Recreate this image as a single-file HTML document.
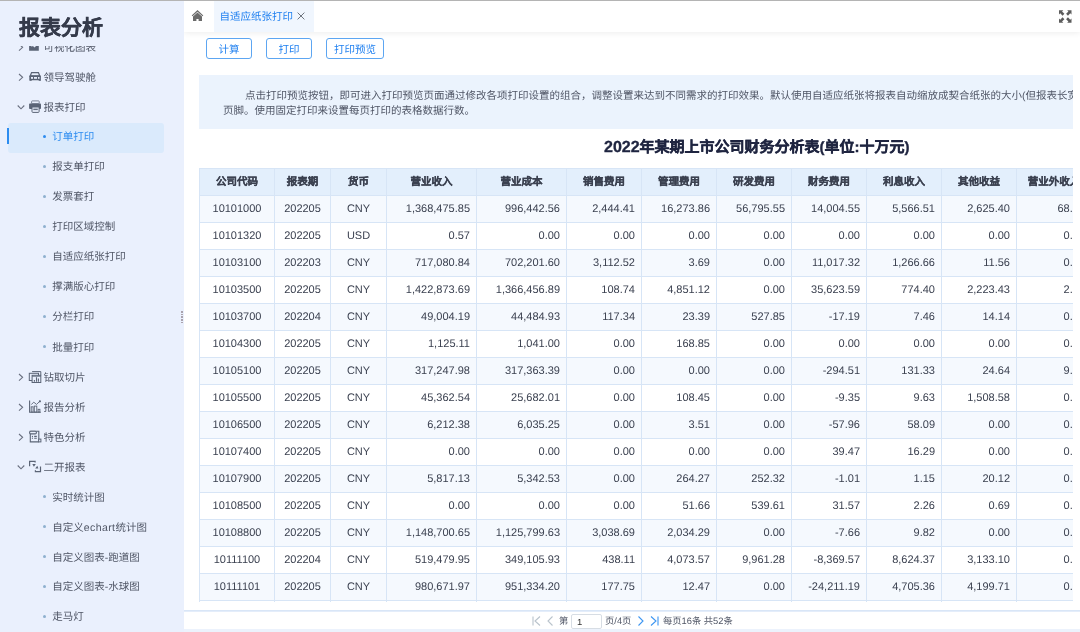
<!DOCTYPE html>
<html lang="zh-CN"><head><meta charset="utf-8">
<style>
*{box-sizing:border-box;margin:0;padding:0}
html,body{width:1080px;height:632px;overflow:hidden;background:#ecf2fc;font-family:"Liberation Sans",sans-serif;text-rendering:geometricPrecision}
.topline{position:absolute;left:0;top:0;width:1080px;height:1px;background:#b4b4b4;z-index:10}
#side{position:absolute;left:0;top:1px;width:184px;height:631px;background:#eaf0fd;overflow:hidden;will-change:transform}
#side .ttl{position:absolute;left:0;top:0;width:184px;height:44.8px;background:#eaf0fd;z-index:2}
#side .ttl span{position:absolute;left:19px;top:16px;font-size:21px;font-weight:bold;color:#353b4b;-webkit-text-stroke:0.4px #353b4b;line-height:24px;white-space:nowrap}
.mi{position:absolute;left:0;width:183px;height:30px;font-size:10.5px;line-height:30px;color:#4f5565;white-space:nowrap}
.mi .t{position:absolute;top:0}
.l1 .t{left:43.5px}
.l2 .t{left:52.3px}
.l2 .dot{position:absolute;left:43px;top:12.4px;width:3px;height:3px;border-radius:50%;background:#8eb0cf}
.mi.sel .bg{position:absolute;left:8px;top:1px;width:155.5px;height:29.5px;background:#daeafc;border-radius:3px}
.mi.sel .bar{position:absolute;left:7px;top:6px;width:2px;height:15.5px;background:#2d8cf0}
.mi.sel .t{color:#2d8cf0}
.mi.sel .dot{background:#2d8cf0}
.arr{position:absolute;left:17px;top:-1px;width:8px;height:30px}
.ico{position:absolute;left:28px;width:14px;height:30px}
.splitter{position:absolute;left:181px;top:310px;width:2px;height:13px;}
.splitter i{display:block;width:1.7px;height:1.6px;background:#aaa3ad;margin-bottom:1.1px}

#main{position:absolute;left:184px;top:1px;width:896px;height:628px;background:#fff;overflow:hidden;will-change:transform}
#hdr{position:absolute;left:0;top:0;width:896px;height:30.5px;background:#fff;box-shadow:0 1px 6px rgba(0,0,0,0.075);z-index:3}
#hdr .home{position:absolute;left:7px;top:9px;width:13px;height:12px}
#hdr .tab{position:absolute;left:30px;top:0;width:99.5px;height:30.5px;background:#f0f6fe;font-size:10.5px;color:#2080f0;line-height:30px;white-space:nowrap}
#hdr .tab span{position:absolute;left:5.5px;top:1px}
#hdr .tab b{position:absolute;left:83px;top:0;font-weight:normal;color:#7f8794;font-size:13px}
#hdr .full{position:absolute;left:875px;top:9px;width:12.5px;height:13px}
.btn{position:absolute;top:37px;height:21px;border:1px solid #5da6f2;border-radius:3px;font-size:10.5px;line-height:23.3px;color:#2080f0;text-align:center;background:#fff;white-space:nowrap}
#clip{position:absolute;left:0;top:31px;width:889px;height:570px;overflow:hidden}
.info{position:absolute;left:15px;top:43px;width:900px;height:54px;background:#ebf3fd;font-size:10.5px;color:#4f5565;white-space:nowrap}
.info p{position:absolute;line-height:15px}
.rtitle{position:absolute;left:420px;top:104.7px;font-size:15px;font-weight:bold;color:#1f2540;-webkit-text-stroke:0.35px #1f2540;white-space:nowrap;line-height:22px}
table{position:absolute;left:15px;top:136px;border-collapse:collapse;table-layout:fixed;width:892px}
th,td{border:1px solid #d7e5f6;height:27px;font-size:10.5px;white-space:nowrap;overflow:hidden;padding:0 6px}
th{background:#e3effc;color:#3b4150;font-weight:bold;text-align:center;padding-bottom:2px;-webkit-text-stroke:0.25px #3b4150}
td{color:#3b4150;font-size:11px;padding-bottom:1px}
td.c{text-align:center}
td.r{text-align:right}
tr.odd td{background:#f5f9fe}
tr.even td{background:#fff}
#pager{position:absolute;left:0;top:609px;width:896px;height:19px;background:#fff;border-top:1px solid #d9e6f7;box-shadow:inset 0 1px 0 #e4edfa;padding-top:1px;font-size:9.3px;color:#4f5565;white-space:nowrap}
#pager .it{position:absolute;top:2px;line-height:17px}
#pager input{position:absolute;left:387px;top:2.5px;width:30.5px;height:15px;border:1px solid #d7dde4;border-radius:2px;font-size:9.5px;padding-left:5px;color:#333;font-family:"Liberation Sans",sans-serif;background:#fff}
</style></head><body>
<div class="topline"></div>
<div id="side">
<div class="ttl"><span>报表分析</span></div>
<div class="mi l1" style="top:32.0px"><svg class="arr" viewBox="0 0 8 30"><path d="M2 12 L5.6 15.3 L2 18.6" stroke="#6a7080" stroke-width="1.1" fill="none"/></svg><svg class="ico" style="top:-1px" viewBox="0 0 14 30"><path d="M1.1 18.7 V11 H3.4 V14.8 L5 14 L6.4 15.6 L7.6 14.6 L8.8 12.5 H10.8 V18.7 Z" fill="#5b6476"/></svg><span class="t">可视化图表</span></div>
<div class="mi l1" style="top:62.0px"><svg class="arr" viewBox="0 0 8 30"><path d="M2 12 L5.6 15.3 L2 18.6" stroke="#6a7080" stroke-width="1.1" fill="none"/></svg><svg class="ico" style="top:-1px" viewBox="0 0 14 30"><path d="M3.6 10.6 H10.4 L11.8 13.9 H2.2 Z" fill="none" stroke="#5b6476" stroke-width="1.2"/><rect x="1.3" y="13.6" width="11.6" height="4.6" rx="0.6" fill="#5b6476"/><rect x="3" y="15" width="2" height="1.8" fill="#eaf0fd"/><rect x="6" y="15" width="3" height="1.8" fill="#eaf0fd"/><rect x="10" y="15" width="1.5" height="1.8" fill="#eaf0fd"/><rect x="1.5" y="17.8" width="2.2" height="1" fill="#5b6476"/><rect x="10.7" y="17.8" width="2.2" height="1" fill="#5b6476"/></svg><span class="t">领导驾驶舱</span></div>
<div class="mi l1" style="top:91.8px"><svg class="arr" viewBox="0 0 8 30"><path d="M0.7 13.5 L4 16.8 L7.3 13.5" stroke="#6a7080" stroke-width="1.1" fill="none"/></svg><svg class="ico" style="top:-1px" viewBox="0 0 14 30"><rect x="3.6" y="8.9" width="7.6" height="2.8" rx="0.6" fill="#eaf0fd" stroke="#7d8698" stroke-width="1"/><rect x="1.1" y="11.5" width="11.9" height="5.5" rx="0.8" fill="#5b6476"/><rect x="4" y="15" width="7.1" height="5.4" rx="0.8" fill="#eaf0fd" stroke="#5b6476" stroke-width="1"/><path d="M5.3 16.2 H9.8" stroke="#98a1b0" stroke-width="0.9"/><path d="M5.3 17.6 H9.8" stroke="#5b6476" stroke-width="1"/></svg><span class="t">报表打印</span></div>
<div class="mi l2 sel" style="top:121.3px"><div class="bg"></div><div class="bar"></div><i class="dot"></i><span class="t">订单打印</span></div>
<div class="mi l2" style="top:151.3px"><i class="dot"></i><span class="t">报支单打印</span></div>
<div class="mi l2" style="top:181.3px"><i class="dot"></i><span class="t">发票套打</span></div>
<div class="mi l2" style="top:211.3px"><i class="dot"></i><span class="t">打印区域控制</span></div>
<div class="mi l2" style="top:241.3px"><i class="dot"></i><span class="t">自适应纸张打印</span></div>
<div class="mi l2" style="top:271.3px"><i class="dot"></i><span class="t">撑满版心打印</span></div>
<div class="mi l2" style="top:301.3px"><i class="dot"></i><span class="t">分栏打印</span></div>
<div class="mi l2" style="top:331.5px"><i class="dot"></i><span class="t">批量打印</span></div>
<div class="mi l1" style="top:362.0px"><svg class="arr" viewBox="0 0 8 30"><path d="M2 12 L5.6 15.3 L2 18.6" stroke="#6a7080" stroke-width="1.1" fill="none"/></svg><svg class="ico" style="top:-1px" viewBox="0 0 14 30"><path d="M4.1 9.6 H12.8 V13.3" fill="none" stroke="#5b6476" stroke-width="1"/><rect x="1.3" y="11.3" width="9.2" height="7.2" fill="#eaf0fd" stroke="#5b6476" stroke-width="1"/><rect x="4.1" y="13.3" width="8.7" height="7.2" fill="#eaf0fd" stroke="#5b6476" stroke-width="1"/><path d="M4.1 14.3 H12.8" stroke="#5b6476" stroke-width="0.8"/><path d="M6.4 19.8 V18 M8.5 19.8 V15.2 M10.4 19.8 V16.6" stroke="#5b6476" stroke-width="1.1"/></svg><span class="t">钻取切片</span></div>
<div class="mi l1" style="top:392.2px"><svg class="arr" viewBox="0 0 8 30"><path d="M2 12 L5.6 15.3 L2 18.6" stroke="#6a7080" stroke-width="1.1" fill="none"/></svg><svg class="ico" style="top:-1px" viewBox="0 0 14 30"><path d="M1.6 8.6 V20.3 H12.8" fill="none" stroke="#5b6476" stroke-width="1.1"/><rect x="3.2" y="14.8" width="1.9" height="5.3" fill="none" stroke="#5b6476" stroke-width="0.9"/><rect x="6.3" y="14.1" width="2.5" height="6" fill="none" stroke="#5b6476" stroke-width="0.9"/><rect x="10.1" y="17.3" width="1.8" height="2.8" fill="none" stroke="#5b6476" stroke-width="0.9"/><path d="M3.3 12.5 L5.8 10.2 L8.5 12.4 L11.5 9.6" fill="none" stroke="#5b6476" stroke-width="0.9"/><circle cx="11.9" cy="9.3" r="1.1" fill="#5b6476"/></svg><span class="t">报告分析</span></div>
<div class="mi l1" style="top:422.1px"><svg class="arr" viewBox="0 0 8 30"><path d="M2 12 L5.6 15.3 L2 18.6" stroke="#6a7080" stroke-width="1.1" fill="none"/></svg><svg class="ico" style="top:-1px" viewBox="0 0 14 30"><path d="M1.6 9.3 H10.8 V17.4" fill="none" stroke="#5b6476" stroke-width="1.1"/><rect x="1.6" y="9.3" width="6.8" height="2.6" rx="1.2" fill="#eaf0fd" stroke="#5b6476" stroke-width="1.1"/><path d="M2.3 11.9 V19.9 H10.8" fill="none" stroke="#5b6476" stroke-width="1.1"/><rect x="10.6" y="17.1" width="2.3" height="2.8" fill="#eaf0fd" stroke="#5b6476" stroke-width="1"/><circle cx="4.4" cy="14.4" r="0.6" fill="#5b6476"/><circle cx="4.4" cy="16.2" r="0.6" fill="#5b6476"/><path d="M6.2 14.4 H8.8 M6.2 16.2 H8.8" stroke="#5b6476" stroke-width="1.1"/></svg><span class="t">特色分析</span></div>
<div class="mi l1" style="top:452.3px"><svg class="arr" viewBox="0 0 8 30"><path d="M0.7 13.5 L4 16.8 L7.3 13.5" stroke="#6a7080" stroke-width="1.1" fill="none"/></svg><svg class="ico" style="top:-1px" viewBox="0 0 14 30"><path d="M1.6 14.2 V9.3 H7.1 V10.6" fill="none" stroke="#5b6476" stroke-width="1.2"/><path d="M4.3 11.9 H7.8 L5.9 14.8 Z" fill="#5b6476"/><path d="M12.5 14.6 V19.7 H7.4 V18.3" fill="none" stroke="#5b6476" stroke-width="1.2"/><path d="M7.2 16.6 H10.4 L9.3 13.7 Z" fill="#5b6476"/></svg><span class="t">二开报表</span></div>
<div class="mi l2" style="top:481.5px"><i class="dot"></i><span class="t">实时统计图</span></div>
<div class="mi l2" style="top:511.6px"><i class="dot"></i><span class="t">自定义<span style="letter-spacing:0.4px">echart</span>统计图</span></div>
<div class="mi l2" style="top:541.5px"><i class="dot"></i><span class="t">自定义图表-跑道图</span></div>
<div class="mi l2" style="top:571.4px"><i class="dot"></i><span class="t">自定义图表-水球图</span></div>
<div class="mi l2" style="top:601.4px"><i class="dot"></i><span class="t">走马灯</span></div>
<div class="splitter"><i></i><i></i><i></i><i></i><i></i></div>

</div>
<div id="main">
  <div id="hdr">
    <svg class="home" viewBox="0 0 13 12"><path d="M6.5 0 L0.7 5.4 L1.5 6.3 L6.5 1.7 L11.5 6.3 L12.3 5.4 Z" fill="#6b6b6b"/><path d="M2 6.6 L6.5 2.6 L11 6.6 V10.9 H7.6 V8.9 H5.4 V10.9 H2 Z" fill="#6b6b6b"/></svg>
    <div class="tab"><span>自适应纸张打印</span><svg style="position:absolute;left:83px;top:11px" width="8" height="8" viewBox="0 0 8 8"><path d="M0.6 0.6L7.4 7.4M7.4 0.6L0.6 7.4" stroke="#5f6670" stroke-width="0.9"/></svg></div>
    <svg class="full" viewBox="0 0 13 13" fill="#5c5c5c"><path d="M0 0H4.5L3.2 1.3L5.6 3.7L3.7 5.6L1.3 3.2L0 4.5Z"/><path d="M13 0V4.5L11.7 3.2L9.3 5.6L7.4 3.7L9.8 1.3L8.5 0Z"/><path d="M0 13V8.5L1.3 9.8L3.7 7.4L5.6 9.3L3.2 11.7L4.5 13Z"/><path d="M13 13H8.5L9.8 11.7L7.4 9.3L9.3 7.4L11.7 9.8L13 8.5Z"/></svg>
  </div>
  <div class="btn" style="left:22px;width:46px">计算</div>
  <div class="btn" style="left:82px;width:46px">打印</div>
  <div class="btn" style="left:142px;width:58px">打印预览</div>
  <div id="clip">
    <div class="info">
      <p style="left:46px;top:14px">点击打印预览按钮，即可进入打印预览页面通过修改各项打印设置的组合，调整设置来达到不同需求的打印效果。默认使用自适应纸张将报表自动缩放成契合纸张的大小(但报表长宽比例不变)，并且每页都会打印表头和</p>
      <p style="left:24px;top:29px">页脚。使用固定打印来设置每页打印的表格数据行数。</p>
    </div>
    <div class="rtitle"><span style="font-size:16px">2022</span>年某期上市公司财务分析表(单位:十万元)</div>
    <table><colgroup><col style="width:75.0px"><col style="width:56.0px"><col style="width:56.0px"><col style="width:90.0px"><col style="width:90.0px"><col style="width:75.0px"><col style="width:75.0px"><col style="width:75.0px"><col style="width:75.0px"><col style="width:75.0px"><col style="width:75.0px"><col style="width:75.0px"></colgroup>
    <thead><tr><th>公司代码</th><th>报表期</th><th>货币</th><th>营业收入</th><th>营业成本</th><th>销售费用</th><th>管理费用</th><th>研发费用</th><th>财务费用</th><th>利息收入</th><th>其他收益</th><th>营业外收入</th></tr></thead>
    <tbody>
<tr class="odd"><td class="c">10101000</td><td class="c">202205</td><td class="c">CNY</td><td class="r">1,368,475.85</td><td class="r">996,442.56</td><td class="r">2,444.41</td><td class="r">16,273.86</td><td class="r">56,795.55</td><td class="r">14,004.55</td><td class="r">5,566.51</td><td class="r">2,625.40</td><td class="r">68.21</td></tr>
<tr class="even"><td class="c">10101320</td><td class="c">202205</td><td class="c">USD</td><td class="r">0.57</td><td class="r">0.00</td><td class="r">0.00</td><td class="r">0.00</td><td class="r">0.00</td><td class="r">0.00</td><td class="r">0.00</td><td class="r">0.00</td><td class="r">0.00</td></tr>
<tr class="odd"><td class="c">10103100</td><td class="c">202203</td><td class="c">CNY</td><td class="r">717,080.84</td><td class="r">702,201.60</td><td class="r">3,112.52</td><td class="r">3.69</td><td class="r">0.00</td><td class="r">11,017.32</td><td class="r">1,266.66</td><td class="r">11.56</td><td class="r">0.00</td></tr>
<tr class="even"><td class="c">10103500</td><td class="c">202205</td><td class="c">CNY</td><td class="r">1,422,873.69</td><td class="r">1,366,456.89</td><td class="r">108.74</td><td class="r">4,851.12</td><td class="r">0.00</td><td class="r">35,623.59</td><td class="r">774.40</td><td class="r">2,223.43</td><td class="r">2.35</td></tr>
<tr class="odd"><td class="c">10103700</td><td class="c">202204</td><td class="c">CNY</td><td class="r">49,004.19</td><td class="r">44,484.93</td><td class="r">117.34</td><td class="r">23.39</td><td class="r">527.85</td><td class="r">-17.19</td><td class="r">7.46</td><td class="r">14.14</td><td class="r">0.00</td></tr>
<tr class="even"><td class="c">10104300</td><td class="c">202205</td><td class="c">CNY</td><td class="r">1,125.11</td><td class="r">1,041.00</td><td class="r">0.00</td><td class="r">168.85</td><td class="r">0.00</td><td class="r">0.00</td><td class="r">0.00</td><td class="r">0.00</td><td class="r">0.00</td></tr>
<tr class="odd"><td class="c">10105100</td><td class="c">202205</td><td class="c">CNY</td><td class="r">317,247.98</td><td class="r">317,363.39</td><td class="r">0.00</td><td class="r">0.00</td><td class="r">0.00</td><td class="r">-294.51</td><td class="r">131.33</td><td class="r">24.64</td><td class="r">9.12</td></tr>
<tr class="even"><td class="c">10105500</td><td class="c">202205</td><td class="c">CNY</td><td class="r">45,362.54</td><td class="r">25,682.01</td><td class="r">0.00</td><td class="r">108.45</td><td class="r">0.00</td><td class="r">-9.35</td><td class="r">9.63</td><td class="r">1,508.58</td><td class="r">0.00</td></tr>
<tr class="odd"><td class="c">10106500</td><td class="c">202205</td><td class="c">CNY</td><td class="r">6,212.38</td><td class="r">6,035.25</td><td class="r">0.00</td><td class="r">3.51</td><td class="r">0.00</td><td class="r">-57.96</td><td class="r">58.09</td><td class="r">0.00</td><td class="r">0.00</td></tr>
<tr class="even"><td class="c">10107400</td><td class="c">202205</td><td class="c">CNY</td><td class="r">0.00</td><td class="r">0.00</td><td class="r">0.00</td><td class="r">0.00</td><td class="r">0.00</td><td class="r">39.47</td><td class="r">16.29</td><td class="r">0.00</td><td class="r">0.00</td></tr>
<tr class="odd"><td class="c">10107900</td><td class="c">202205</td><td class="c">CNY</td><td class="r">5,817.13</td><td class="r">5,342.53</td><td class="r">0.00</td><td class="r">264.27</td><td class="r">252.32</td><td class="r">-1.01</td><td class="r">1.15</td><td class="r">20.12</td><td class="r">0.00</td></tr>
<tr class="even"><td class="c">10108500</td><td class="c">202205</td><td class="c">CNY</td><td class="r">0.00</td><td class="r">0.00</td><td class="r">0.00</td><td class="r">51.66</td><td class="r">539.61</td><td class="r">31.57</td><td class="r">2.26</td><td class="r">0.69</td><td class="r">0.00</td></tr>
<tr class="odd"><td class="c">10108800</td><td class="c">202205</td><td class="c">CNY</td><td class="r">1,148,700.65</td><td class="r">1,125,799.63</td><td class="r">3,038.69</td><td class="r">2,034.29</td><td class="r">0.00</td><td class="r">-7.66</td><td class="r">9.82</td><td class="r">0.00</td><td class="r">0.00</td></tr>
<tr class="even"><td class="c">10111100</td><td class="c">202204</td><td class="c">CNY</td><td class="r">519,479.95</td><td class="r">349,105.93</td><td class="r">438.11</td><td class="r">4,073.57</td><td class="r">9,961.28</td><td class="r">-8,369.57</td><td class="r">8,624.37</td><td class="r">3,133.10</td><td class="r">0.00</td></tr>
<tr class="odd"><td class="c">10111101</td><td class="c">202205</td><td class="c">CNY</td><td class="r">980,671.97</td><td class="r">951,334.20</td><td class="r">177.75</td><td class="r">12.47</td><td class="r">0.00</td><td class="r">-24,211.19</td><td class="r">4,705.36</td><td class="r">4,199.71</td><td class="r">0.00</td></tr>
<tr class="even"><td>&nbsp;</td><td>&nbsp;</td><td>&nbsp;</td><td>&nbsp;</td><td>&nbsp;</td><td>&nbsp;</td><td>&nbsp;</td><td>&nbsp;</td><td>&nbsp;</td><td>&nbsp;</td><td>&nbsp;</td><td>&nbsp;</td></tr>

    </tbody></table>
  </div>
  <div id="pager">
    <svg class="it" style="left:348px;top:5px" width="9" height="10" viewBox="0 0 9 10"><path d="M1 0.5V9.5M8 0.5L3 5L8 9.5" stroke="#b9c3cc" stroke-width="1.1" fill="none"/></svg>
    <svg class="it" style="left:363px;top:5px" width="6" height="10" viewBox="0 0 6 10"><path d="M5.5 0.5L1 5L5.5 9.5" stroke="#b9c3cc" stroke-width="1.1" fill="none"/></svg>
    <span class="it" style="left:375px">第</span>
    <input value="1">
    <span class="it" style="left:421px">页/4页</span>
    <svg class="it" style="left:454px;top:5px" width="6" height="10" viewBox="0 0 6 10"><path d="M0.5 0.5L5 5L0.5 9.5" stroke="#3d96f2" stroke-width="1.1" fill="none"/></svg>
    <svg class="it" style="left:466px;top:5px" width="9" height="10" viewBox="0 0 9 10"><path d="M8 0.5V9.5M1 0.5L6 5L1 9.5" stroke="#3d96f2" stroke-width="1.1" fill="none"/></svg>
    <span class="it" style="left:479px">每页16条 共52条</span>
  </div>
</div>
</body></html>
